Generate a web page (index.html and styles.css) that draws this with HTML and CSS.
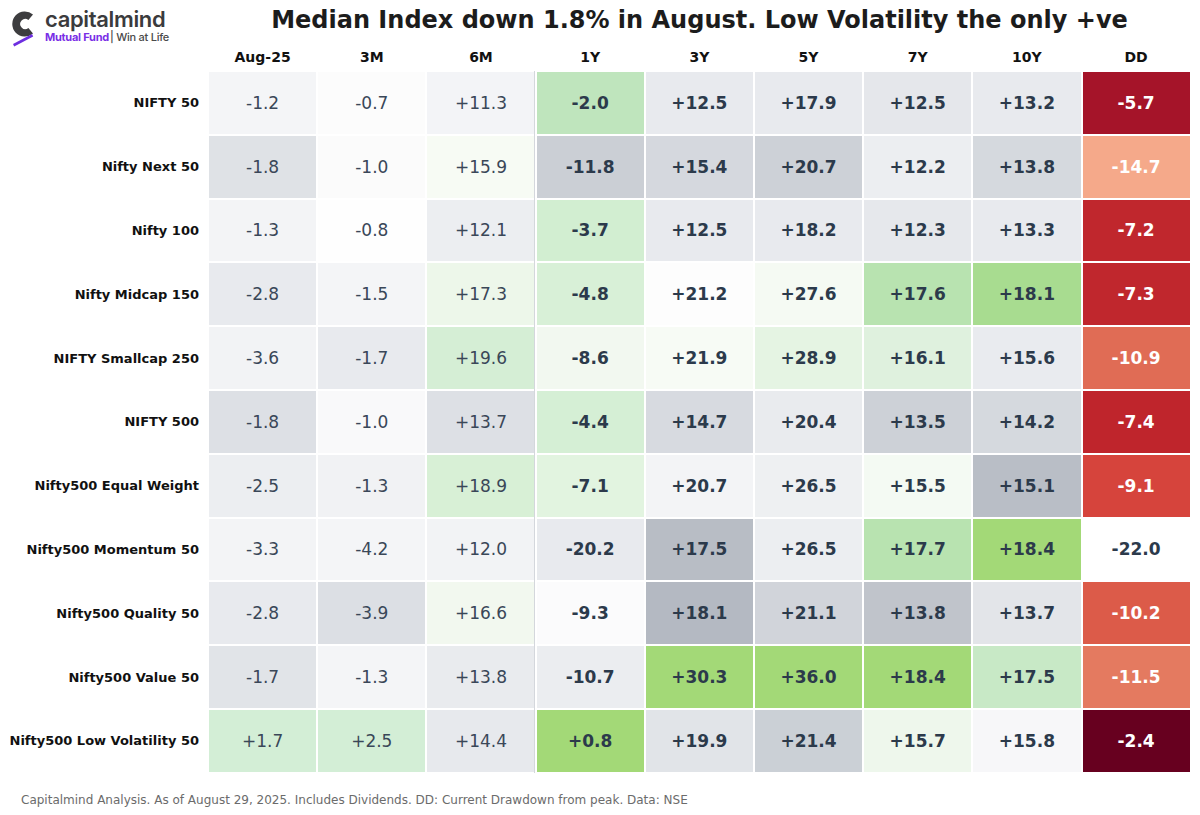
FILE: index.html
```html
<!DOCTYPE html>
<html>
<head>
<meta charset="utf-8">
<link rel="stylesheet" href="styles.css">
</head>
<body>
<div class="page">
  <div class="top">
    <div class="logo">
      <svg class="mark" width="40" height="44" viewBox="8 6 40 44">
        <path d="M33 14.6 A12.5 12.5 0 1 0 33 33.4 L28.4 27.9 A5 5 0 1 1 28.4 20.1 Z" fill="#3d3d3f"/>
        <polygon points="13,44 32,34 33.2,36.6 14.2,46.6" fill="#6d2ee0"/>
      </svg>
      <div class="brand">
        <div class="name">capitalmind</div>
        <div class="tag"><span class="mf">Mutual Fund</span><span class="wl">| Win at Life</span></div>
      </div>
    </div>
    <h1 class="title">Median Index down 1.8% in August. Low Volatility the only +ve</h1>
  </div>

  <div class="table">
    <div class="corner"></div>
    <div class="hd">Aug-25</div><div class="hd">3M</div><div class="hd">6M</div><div class="hd">1Y</div><div class="hd">3Y</div><div class="hd">5Y</div><div class="hd">7Y</div><div class="hd">10Y</div><div class="hd">DD</div>

    <div class="lbl">NIFTY 50</div>
    <div class="c n" style="background:#f4f5f7">-1.2</div><div class="c n" style="background:#fcfcfc">-0.7</div><div class="c n" style="background:#f3f4f7">+11.3</div>
    <div class="c b sep" style="background:#bfe5bd">-2.0</div><div class="c b" style="background:#e8eaee">+12.5</div><div class="c b" style="background:#e8eaee">+17.9</div><div class="c b" style="background:#e5e7eb">+12.5</div><div class="c b" style="background:#e8eaee">+13.2</div><div class="c b w" style="background:#a51429">-5.7</div>

    <div class="lbl">Nifty Next 50</div>
    <div class="c n" style="background:#dfe2e6">-1.8</div><div class="c n" style="background:#fbfbfb">-1.0</div><div class="c n" style="background:#f7fbf4">+15.9</div>
    <div class="c b sep" style="background:#cbcfd5">-11.8</div><div class="c b" style="background:#d5d8de">+15.4</div><div class="c b" style="background:#cdd1d7">+20.7</div><div class="c b" style="background:#eceef1">+12.2</div><div class="c b" style="background:#d5d9de">+13.8</div><div class="c b w" style="background:#f5a98a">-14.7</div>

    <div class="lbl">Nifty 100</div>
    <div class="c n" style="background:#f3f4f6">-1.3</div><div class="c n" style="background:#fefefe">-0.8</div><div class="c n" style="background:#eceef1">+12.1</div>
    <div class="c b sep" style="background:#d2eed1">-3.7</div><div class="c b" style="background:#e8eaee">+12.5</div><div class="c b" style="background:#e8eaee">+18.2</div><div class="c b" style="background:#e6e8ec">+12.3</div><div class="c b" style="background:#e8eaee">+13.3</div><div class="c b w" style="background:#c0272d">-7.2</div>

    <div class="lbl">Nifty Midcap 150</div>
    <div class="c n" style="background:#e8eaee">-2.8</div><div class="c n" style="background:#f4f5f7">-1.5</div><div class="c n" style="background:#edf7ea">+17.3</div>
    <div class="c b sep" style="background:#d8f0d7">-4.8</div><div class="c b" style="background:#fdfdfd">+21.2</div><div class="c b" style="background:#f5faf3">+27.6</div><div class="c b" style="background:#b8e3b0">+17.6</div><div class="c b" style="background:#a8dc90">+18.1</div><div class="c b w" style="background:#c0272d">-7.3</div>

    <div class="lbl">NIFTY Smallcap 250</div>
    <div class="c n" style="background:#f2f3f5">-3.6</div><div class="c n" style="background:#e8eaee">-1.7</div><div class="c n" style="background:#d5eed5">+19.6</div>
    <div class="c b sep" style="background:#f2f8f0">-8.6</div><div class="c b" style="background:#f7fbf5">+21.9</div><div class="c b" style="background:#e5f4e3">+28.9</div><div class="c b" style="background:#dff1de">+16.1</div><div class="c b" style="background:#e9ebef">+15.6</div><div class="c b w" style="background:#e06c55">-10.9</div>

    <div class="lbl">NIFTY 500</div>
    <div class="c n" style="background:#dde0e5">-1.8</div><div class="c n" style="background:#f9f9fa">-1.0</div><div class="c n" style="background:#dde0e5">+13.7</div>
    <div class="c b sep" style="background:#d5efd5">-4.4</div><div class="c b" style="background:#d7dae0">+14.7</div><div class="c b" style="background:#e9ebee">+20.4</div><div class="c b" style="background:#cdd1d7">+13.5</div><div class="c b" style="background:#d5d9de">+14.2</div><div class="c b w" style="background:#bf252c">-7.4</div>

    <div class="lbl">Nifty500 Equal Weight</div>
    <div class="c n" style="background:#eceef1">-2.5</div><div class="c n" style="background:#f1f2f4">-1.3</div><div class="c n" style="background:#d8f0d6">+18.9</div>
    <div class="c b sep" style="background:#e2f4e0">-7.1</div><div class="c b" style="background:#f3f4f6">+20.7</div><div class="c b" style="background:#eef0f2">+26.5</div><div class="c b" style="background:#f4faf3">+15.5</div><div class="c b" style="background:#b9bec6">+15.1</div><div class="c b w" style="background:#d6443c">-9.1</div>

    <div class="lbl">Nifty500 Momentum 50</div>
    <div class="c n" style="background:#f3f4f6">-3.3</div><div class="c n" style="background:#f4f5f7">-4.2</div><div class="c n" style="background:#f2f3f5">+12.0</div>
    <div class="c b sep" style="background:#e8eaee">-20.2</div><div class="c b" style="background:#b8bdc5">+17.5</div><div class="c b" style="background:#eceef1">+26.5</div><div class="c b" style="background:#b8e3b0">+17.7</div><div class="c b" style="background:#a3d977">+18.4</div><div class="c b" style="background:#ffffff">-22.0</div>

    <div class="lbl">Nifty500 Quality 50</div>
    <div class="c n" style="background:#e8eaee">-2.8</div><div class="c n" style="background:#dcdfe4">-3.9</div><div class="c n" style="background:#f2f8ef">+16.6</div>
    <div class="c b sep" style="background:#fbfbfc">-9.3</div><div class="c b" style="background:#b4b9c2">+18.1</div><div class="c b" style="background:#d1d4da">+21.1</div><div class="c b" style="background:#c0c4cb">+13.8</div><div class="c b" style="background:#e3e5e9">+13.7</div><div class="c b w" style="background:#dc5b49">-10.2</div>

    <div class="lbl">Nifty500 Value 50</div>
    <div class="c n" style="background:#e1e4e8">-1.7</div><div class="c n" style="background:#f4f5f7">-1.3</div><div class="c n" style="background:#e9ebee">+13.8</div>
    <div class="c b sep" style="background:#ebedf0">-10.7</div><div class="c b" style="background:#a3d977">+30.3</div><div class="c b" style="background:#a3d977">+36.0</div><div class="c b" style="background:#a3d977">+18.4</div><div class="c b" style="background:#c8e9c6">+17.5</div><div class="c b w" style="background:#e47a60">-11.5</div>

    <div class="lbl">Nifty500 Low Volatility 50</div>
    <div class="c n" style="background:#d3eed6">+1.7</div><div class="c n" style="background:#d3eed6">+2.5</div><div class="c n" style="background:#e7e9ed">+14.4</div>
    <div class="c b sep" style="background:#a3d977">+0.8</div><div class="c b" style="background:#e1e4e8">+19.9</div><div class="c b" style="background:#cbd0d6">+21.4</div><div class="c b" style="background:#eef7ec">+15.7</div><div class="c b" style="background:#f7f7f9">+15.8</div><div class="c b w" style="background:#67001f">-2.4</div>
  </div>

  <div class="foot">Capitalmind Analysis. As of August 29, 2025. Includes Dividends. DD: Current Drawdown from peak. Data: NSE</div>
</div>
</body>
</html>
```

FILE: styles.css
```css
html, body {
  margin: 0;
  padding: 0;
  background: #ffffff;
}
.page {
  width: 1200px;
  height: 815px;
  overflow: hidden;
  font-family: "DejaVu Sans", "Liberation Sans", sans-serif;
}
.top {
  display: grid;
  grid-template-columns: 209px 981px;
  height: 44px;
}
.logo {
  display: flex;
  align-items: flex-start;
  padding: 6px 0 0 8px;
}
.mark {
  display: block;
  flex: none;
}
.brand {
  margin-left: -3px;
  padding-top: 2px;
  font-family: Inter, "Open Sans", sans-serif;
}
.name {
  font-size: 22px;
  font-weight: 600;
  color: #3b3b3d;
  line-height: 23px;
  letter-spacing: -0.35px;
}
.tag {
  font-size: 11px;
  line-height: 13px;
  letter-spacing: -0.25px;
}
.mf {
  color: #7a2fe6;
  font-weight: 700;
}
.wl {
  color: #4a4a4a;
  font-weight: 500;
  margin-left: 1px;
}
.title {
  margin: 0;
  padding-top: 2px;
  font-size: 24px;
  line-height: 36px;
  font-weight: bold;
  color: #1c1c1c;
  text-align: center;
  white-space: nowrap;
}
.table {
  display: grid;
  grid-template-columns: 207px repeat(9, 107.2px);
  grid-template-rows: 26px repeat(11, 61.8px);
  column-gap: 2px;
  row-gap: 2px;
}
.hd {
  display: flex;
  align-items: center;
  justify-content: center;
  font-size: 14px;
  font-weight: bold;
  color: #111111;
}
.lbl {
  display: flex;
  align-items: center;
  justify-content: flex-end;
  padding-right: 8px;
  font-size: 13px;
  font-weight: bold;
  color: #111111;
  white-space: nowrap;
}
.c {
  display: flex;
  align-items: center;
  justify-content: center;
  font-size: 17px;
  color: #2c3a4b;
}
.n {
  font-weight: normal;
  color: #3a4758;
}
.b {
  font-weight: bold;
}
.w {
  color: #ffffff;
}
.sep {
  position: relative;
}
.sep::before {
  content: "";
  position: absolute;
  left: -2.5px;
  top: -1px;
  bottom: -1px;
  width: 1px;
  background: #d4d7dc;
}
.foot {
  margin-top: 20px;
  padding-left: 21px;
  font-size: 12px;
  line-height: 16px;
  color: #6b6b6b;
}
```
